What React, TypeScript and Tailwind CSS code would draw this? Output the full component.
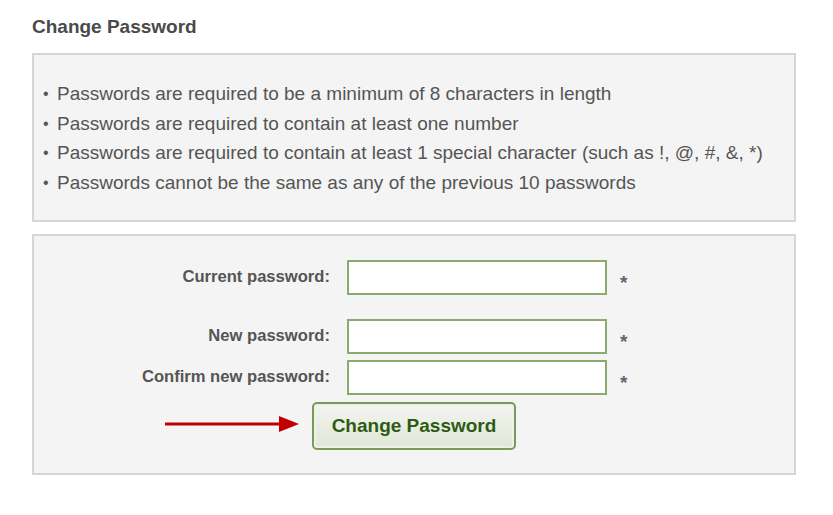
const rules = [
  'Passwords are required to be a minimum of 8 characters in length',
  'Passwords are required to contain at least one number',
  'Passwords are required to contain at least 1 special character (such as !, @, #, &, *)',
  'Passwords cannot be the same as any of the previous 10 passwords',
];

const fields = [
  { label: 'Current password:', gap: 'mt-0' },
  { label: 'New password:', gap: 'mt-[24px]' },
  { label: 'Confirm new password:', gap: 'mt-[6px]' },
];

const Arrow = () => (
  <svg width="134" height="18" viewBox="0 0 134 18" className="mr-[13px] mb-[3px]">
    <line x1="0" y1="9" x2="118" y2="9" stroke="#c00000" strokeWidth="3" />
    <polygon points="114,1 134,9 114,17" fill="#c00000" />
  </svg>
);

export default function App() {
  return (
    <div className="w-[833px] h-[515px] bg-white pt-[15px] pl-[32px] font-['Liberation_Sans',Arial,sans-serif]">
      <h1 className="text-[19px] leading-[24px] font-bold text-[#4a4a4a]">Change Password</h1>

      <div className="mt-[14px] w-[764px] border-2 border-[#d6d6d6] bg-[#f4f4f4] pt-[24px] pb-[22px] pl-[9px]">
        <ul>
          {rules.map((r) => (
            <li key={r} className="flex text-[19px] leading-[29.7px] text-[#555555]">
              <span className="w-[14px] text-[16px]">•</span>
              <span>{r}</span>
            </li>
          ))}
        </ul>
      </div>

      <div className="mt-[12px] w-[764px] h-[241px] border-2 border-[#d6d6d6] bg-[#f4f4f4] pt-[24px]">
        {fields.map((f) => (
          <div key={f.label} className={`flex items-center ${f.gap}`}>
            <label className="w-[296px] text-right text-[16.6px] font-bold text-[#555555]">{f.label}</label>
            <input
              type="password"
              className="ml-[17px] w-[260px] h-[35px] border-2 border-[#8aab6e] bg-white outline-none"
            />
            <span className="ml-[13px] mt-[11px] text-[19px] leading-none font-bold text-[#666666]">*</span>
          </div>
        ))}
        <div className="flex items-center mt-[7px] pl-[131px]">
          <Arrow />
          <button className="w-[204px] h-[48px] rounded-[5px] border-2 border-[#7a9a5c] bg-gradient-to-b from-[#f3f5ef] to-[#dfe6d7] text-[19px] font-bold text-[#2f5a16] shadow-[inset_0_0_0_2px_#eef1ea]">
            Change Password
          </button>
        </div>
      </div>
    </div>
  );
}
